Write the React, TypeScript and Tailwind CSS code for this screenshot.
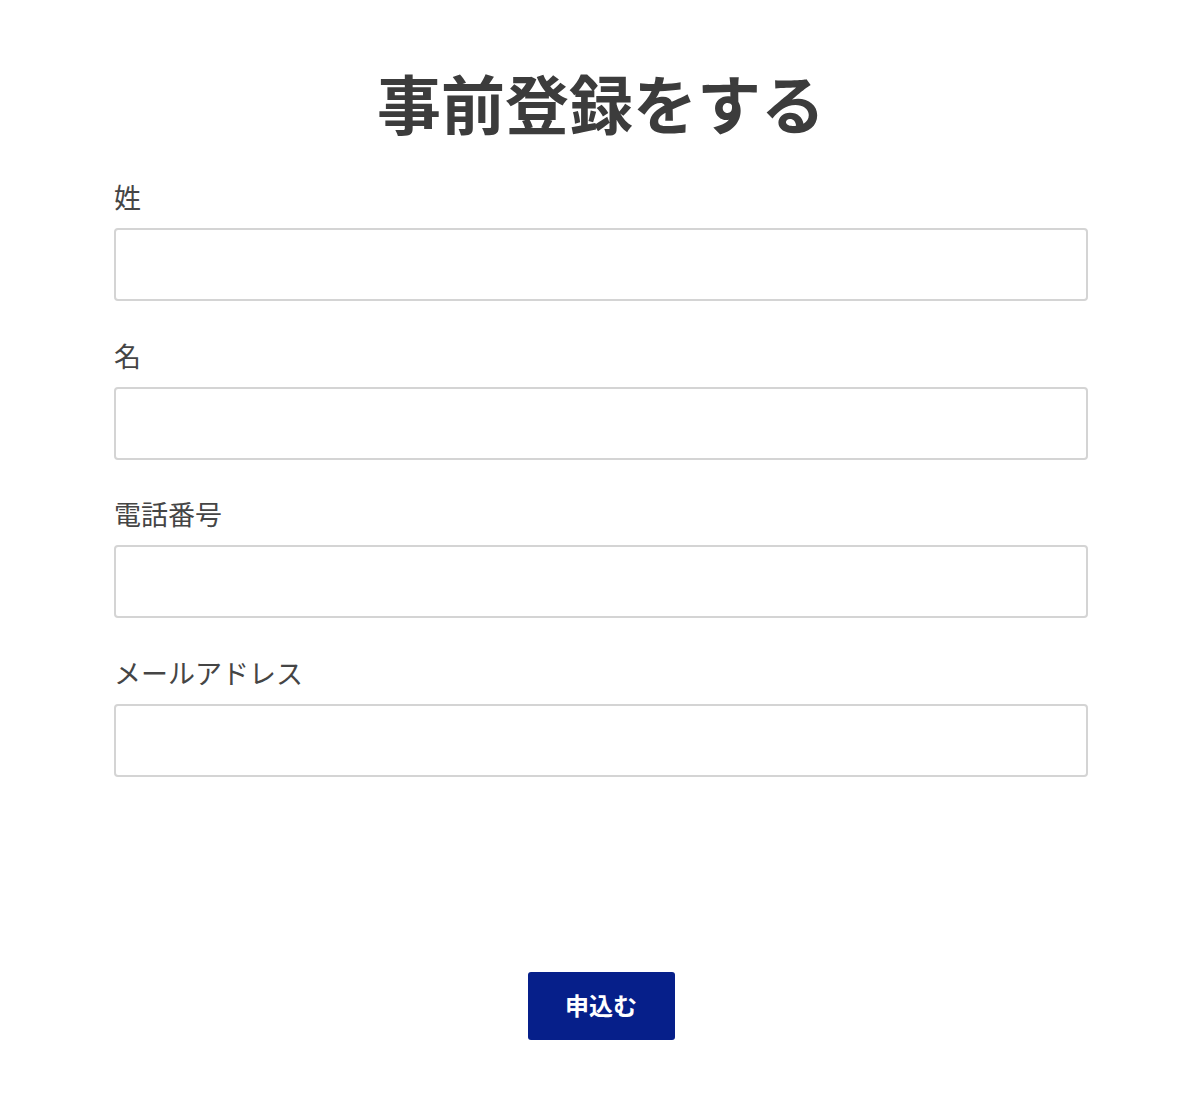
const fields = ['姓', '名', '電話番号', 'メールアドレス'];

export default function App() {
  return (
    <div
      className="min-h-[1117px] bg-white"
      style={{ fontFamily: '"Noto Sans CJK JP", "Noto Sans", sans-serif' }}
    >
      <div className="mx-auto w-[974px] translate-x-[1px] pt-[53px]">
        <h1 className="text-center text-[64px] font-bold leading-[96px] text-[#3c3c3c]">
          事前登録をする
        </h1>

        <form className="mt-[28px]" onSubmit={(e) => e.preventDefault()}>
          {fields.map((label) => (
            <div key={label} className="mb-[34.7px]">
              <label className="block text-[27px] leading-[40px] text-[#454545]">{label}</label>
              <input
                type="text"
                className="mt-[11px] block h-[73px] w-full rounded-[4px] border-2 border-[#d4d4d4] bg-white px-4 text-[22px] outline-none"
              />
            </div>
          ))}

          <div className="flex justify-center pt-[160px]">
            <button
              type="submit"
              className="h-[68px] w-[147px] rounded-[3px] bg-[#061f8a] pb-[2px] text-[24px] font-bold text-white"
            >
              申込む
            </button>
          </div>
        </form>
      </div>
    </div>
  );
}
